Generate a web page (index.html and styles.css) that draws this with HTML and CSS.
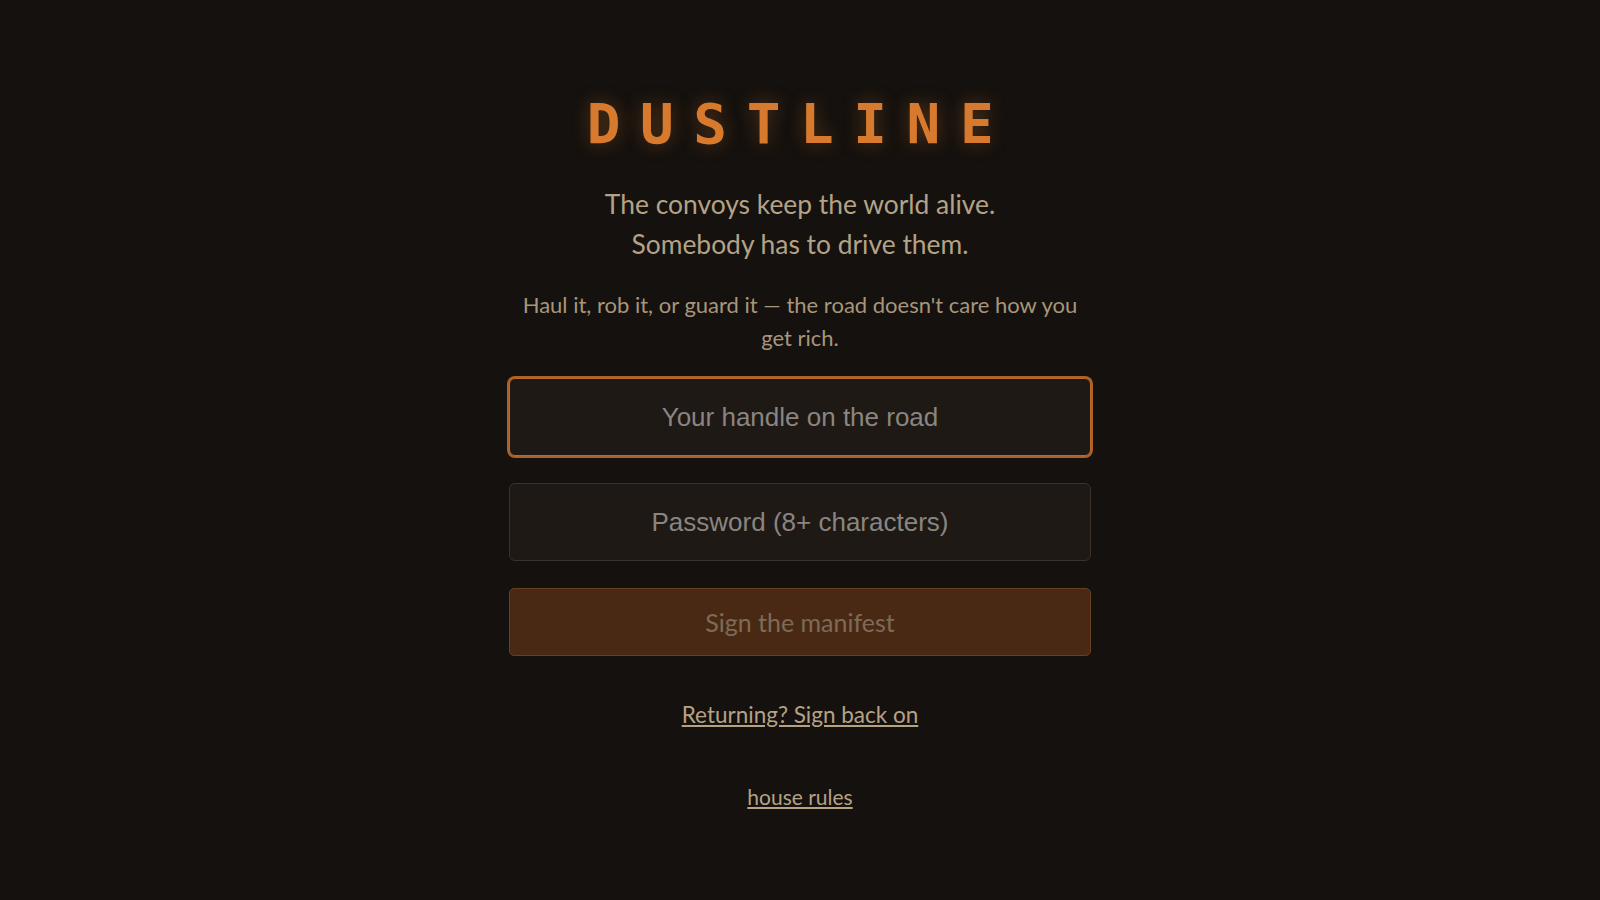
FILE: index.html
```html
<!DOCTYPE html>
<html lang="en">
<head>
<meta charset="utf-8">
<title>Dustline</title>
<link rel="stylesheet" href="styles.css">
</head>
<body>
<main class="page">
  <h1 class="logo">DUSTLINE</h1>
  <p class="tagline">The convoys keep the world alive.<br>Somebody has to drive them.</p>
  <p class="pitch">Haul it, rob it, or guard it — the road doesn't care how you get rich.</p>
  <form class="form">
    <input class="field field-focus" type="text" placeholder="Your handle on the road">
    <input class="field" type="password" placeholder="Password (8+ characters)">
    <button class="submit" type="button">Sign the manifest</button>
  </form>
  <a class="link link-return" href="#">Returning? Sign back on</a>
  <a class="link link-rules" href="#">house rules</a>
</main>
</body>
</html>
```

FILE: styles.css
```css
* { box-sizing: border-box; }
html, body { margin: 0; padding: 0; }
body {
  background: #15110e;
  color: #b5a285;
  font-family: Lato, "Open Sans", sans-serif;
  min-height: 900px;
}
.page {
  width: 582px;
  margin: 0 auto;
  padding-top: 88px;
  display: flex;
  flex-direction: column;
  align-items: center;
  text-align: center;
}
.logo {
  margin: 0;
  font-family: "DejaVu Sans Mono", monospace;
  font-weight: bold;
  font-size: 56px;
  line-height: 72px;
  letter-spacing: 0.35em;
  color: #d77a2e;
  text-shadow: 0 0 18px rgba(215, 122, 46, 0.35);
}
.tagline {
  margin: 24px 0 0;
  font-size: 26.4px;
  line-height: 40px;
  color: #b4a286;
}
.pitch {
  margin: 24px 0 0;
  font-size: 22px;
  line-height: 33px;
  color: #a8967b;
}
.form {
  width: 100%;
  margin-top: 24px;
  display: flex;
  flex-direction: column;
  gap: 27px;
}
.field {
  width: 100%;
  height: 78px;
  background: #1e1915;
  border: 1px solid #3a322b;
  border-radius: 6px;
  color: #c9b89c;
  font-family: "Liberation Sans", Arial, sans-serif;
  font-size: 26px;
  text-align: center;
  outline: none;
}
.field::placeholder { color: #8a8580; }
.field-focus {
  border-color: #b8692c;
  box-shadow: 0 0 0 2px #ad6029;
}
.submit {
  width: 100%;
  height: 68px;
  background: #4a2914;
  border: 1px solid #6a3e1e;
  border-radius: 5px;
  color: #7e6b57;
  font-family: Lato, "Open Sans", sans-serif;
  font-size: 25px;
}
.link {
  color: #b5a285;
  text-decoration: underline;
  font-size: 22.5px;
  line-height: 26px;
}
.link-return { margin-top: 46px; }
.link-rules { margin-top: 56px; font-size: 21px; }
```
